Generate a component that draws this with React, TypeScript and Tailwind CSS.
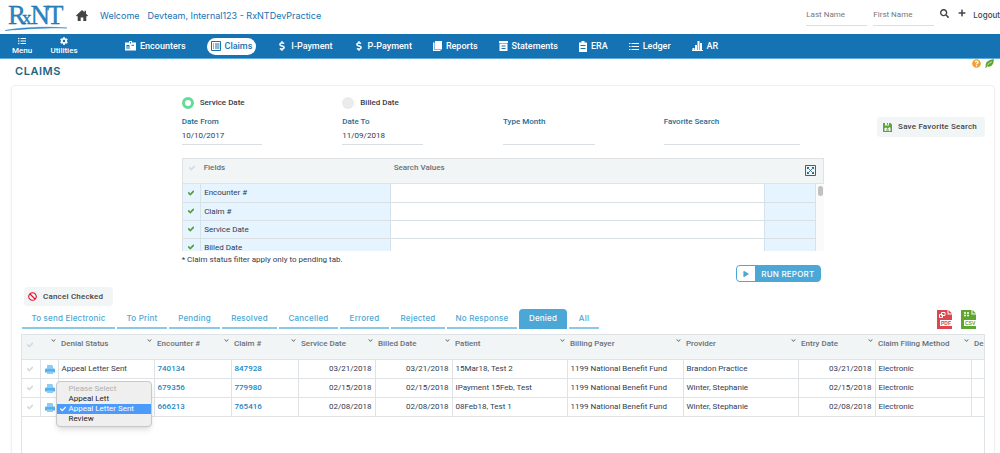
import { useState } from 'react';
import type { ReactNode } from 'react';
import clsx from 'clsx';
import {
  FaBan,
  FaCheck,
  FaChevronDown,
  FaCog,
  FaDollarSign,
  FaListUl,
  FaPlay,
  FaPlus,
  FaQuestionCircle,
  FaSearch,
  FaSort,
} from 'react-icons/fa';

type Claim = {
  status: string;
  encounter: string;
  claim: string;
  serviceDate: string;
  billedDate: string;
  patient: string;
  provider: string;
};

const claims: Claim[] = [
  {
    status: 'Appeal Letter Sent',
    encounter: '740134',
    claim: '847928',
    serviceDate: '03/21/2018',
    billedDate: '03/21/2018',
    patient: '15Mar18, Test 2',
    provider: 'Brandon Practice',
  },
  {
    status: '',
    encounter: '679356',
    claim: '779980',
    serviceDate: '02/15/2018',
    billedDate: '02/15/2018',
    patient: 'IPayment 15Feb, Test',
    provider: 'Winter, Stephanie',
  },
  {
    status: '',
    encounter: '666213',
    claim: '765416',
    serviceDate: '02/08/2018',
    billedDate: '02/08/2018',
    patient: '08Feb18, Test 1',
    provider: 'Winter, Stephanie',
  },
];

const columns = [
  { label: '', width: 'w-[18px]' },
  { label: '', width: 'w-[18px]' },
  { label: 'Denial Status', width: 'w-[96px]' },
  { label: 'Encounter #', width: 'w-[77px]' },
  { label: 'Claim #', width: 'w-[67px]' },
  { label: 'Service Date', width: 'w-[77px]' },
  { label: 'Billed Date', width: 'w-[77px]' },
  { label: 'Patient', width: 'w-[115px]' },
  { label: 'Billing Payer', width: 'w-[116px]' },
  { label: 'Provider', width: 'w-[115px]' },
  { label: 'Entry Date', width: 'w-[77px]' },
  { label: 'Claim Filing Method', width: 'w-[96px]' },
  { label: 'De', width: 'w-[77px]' },
];

const tabs = [
  { label: 'To send Electronic', width: 'w-[93px]' },
  { label: 'To Print', width: 'w-[50px]' },
  { label: 'Pending', width: 'w-[51px]' },
  { label: 'Resolved', width: 'w-[55px]' },
  { label: 'Cancelled', width: 'w-[59px]' },
  { label: 'Errored', width: 'w-[49px]' },
  { label: 'Rejected', width: 'w-[54px]' },
  { label: 'No Response', width: 'w-[70px]' },
  { label: 'Denied', width: 'w-[48px]' },
  { label: 'All', width: 'w-[30px]' },
];

const fields = ['Encounter #', 'Claim #', 'Service Date', 'Billed Date'];

const statuses = ['Appeal Lett', 'Appeal Letter Sent', 'Review'];

function Logo() {
  return (
    <svg width="64" height="32" viewBox="0 0 64 32" role="img" aria-label="RxNT">
      <text
        x="3"
        y="23"
        fontSize="27"
        fontFamily="'Liberation Serif', serif"
        fill="#2a86c6"
        stroke="#1b5f94"
        strokeWidth="0.3"
      >
        R<tspan dx="-4" fontSize="19">x</tspan>
        <tspan dx="-1">N</tspan>
        <tspan dx="-3">T</tspan>
      </text>
      <path d="M0 29.5C18 26 42 25.5 62 27C42 26.5 18 28 0 29.5Z" fill="#2a86c6" stroke="#2a86c6" strokeWidth="0.5" />
    </svg>
  );
}

function HomeIcon() {
  return (
    <svg width="12" height="11" viewBox="0 0 12 11" fill="currentColor">
      <path d="M6 0L8.500 2.300V.8H10v2.900L12 5.600 11.400 6.300H10.300V11H7.300V7.500H4.700V11H1.700V6.300H.6L0 5.600Z" />
    </svg>
  );
}

function LeafIcon() {
  return (
    <svg width="9" height="9" viewBox="0 0 9 9">
      <path d="M.8 7.500C0 3.500 3 .8 8.800 0C9 5 6.500 8.500 2.200 7.600L.9 9L0 8.600Z" fill="#5fa52f" />
      <path d="M2.200 6.200C3.500 4.800 4.800 3.700 6.800 2.700" stroke="#fff" strokeWidth=".7" fill="none" />
    </svg>
  );
}

function PrinterIcon() {
  return (
    <svg width="10" height="9" viewBox="0 0 10 9">
      <path d="M2 0h5l1 1v2.500H2Z" fill="#8ecbf5" />
      <path d="M0 4.500Q0 3.500 1 3.500h8Q10 3.500 10 4.500V7.500H0Z" fill="#55b0ee" />
      <path d="M2 6.500h6v2.500H2Z" fill="#8ecbf5" />
    </svg>
  );
}

function BadgeIcon() {
  return (
    <svg width="11" height="10" viewBox="0 0 11 10" fill="currentColor">
      <path
        fillRule="evenodd"
        d="M0 1.500h4V0h3v1.500H11V9.500H0ZM5 1v1.500h1V1ZM1.500 4v4h1V5.200h1V8h1V4ZM6.500 3.800v1h2.500v-1Z"
      />
    </svg>
  );
}

function GridListIcon() {
  return (
    <svg width="10" height="10" viewBox="0 0 10 10" fill="none" stroke="currentColor">
      <path d="M.5 .5h9v9h-9Z" />
      <path d="M2 3h1M4 3h4.500M2 5h1M4 5h4.500M2 7h1M4 7h4.500" />
    </svg>
  );
}

function PagesIcon() {
  return (
    <svg width="9" height="10" viewBox="0 0 9 10" fill="currentColor">
      <path d="M2 0H9v8.500H2Z" />
      <path d="M1.500 1.500H0V10h7.500V9H1.500Z" />
    </svg>
  );
}

function StatementIcon() {
  return (
    <svg width="9" height="10" viewBox="0 0 9 10" fill="currentColor">
      <path fillRule="evenodd" d="M0 0h9v2H0ZM.5 2.500h8V10h-8ZM2.500 4.500v1h4v-1ZM2.500 7v1h4V7Z" />
    </svg>
  );
}

function ClipboardIcon() {
  return (
    <svg width="8" height="11" viewBox="0 0 8 11" fill="currentColor">
      <path fillRule="evenodd" d="M0 1.500h2.500V0h3v1.500H8V11H0ZM1.500 4v1h5V4ZM1.500 7v1h5V7Z" />
    </svg>
  );
}

function LinesIcon() {
  return (
    <svg width="10" height="8" viewBox="0 0 10 8" stroke="currentColor">
      <path d="M0 1.500h1.500M2.500 1.500H10M0 4.500h1.500M2.500 4.500H10M0 7.500h1.500M2.500 7.500H10" />
    </svg>
  );
}

function BarsIcon() {
  return (
    <svg width="11" height="10" viewBox="0 0 11 10" fill="currentColor">
      <path d="M0 9h11v1H0ZM.5 7h2v2h-2ZM3 4h2v5H3ZM5.500 0h2v9h-2ZM8 2h2v7H8Z" />
    </svg>
  );
}

function ExpandIcon() {
  return (
    <svg width="11" height="11" viewBox="0 0 11 11" fill="none" stroke="currentColor">
      <path d="M.5 .5h10v10H.5Z" />
      <path d="M3 3l5 5M8 3L3 8" strokeWidth=".8" />
      <path d="M2 2h2v1H3v1H2ZM7 2h2v2H8V3H7ZM2 7h1v1h1v1H2ZM8 7h1v2H7V8h1Z" fill="currentColor" stroke="none" />
    </svg>
  );
}

function SaveIcon() {
  return (
    <svg width="9" height="9" viewBox="0 0 9 9">
      <path
        fillRule="evenodd"
        fill="#5fa52f"
        d="M0 0h2v2.500h4V0h1.500L9 1.500V9H0ZM1.500 5V8h6V5L6.500 4 4.500 6 3.200 4.500ZM4 0h1v1.800H4Z"
      />
      <path d="M3 7h3" stroke="#5fa52f" />
    </svg>
  );
}

function FileIcon({ label, color }: { label: string; color: string }) {
  return (
    <svg width="15" height="19" viewBox="0 0 15 19">
      <path d="M0 0h10.500v4.500H15V19H0Z" fill={color} />
      <path d="M11.500 0L15 3.500h-3.500Z" fill={color} />
      <path d="M3 10h12v6H3Z" fill="#fff" />
      {label === 'PDF' ? (
        <path d="M4.500 2.500h3.500v3h-3.500ZM2.500 4.500h3v3h-3Z" fill="none" stroke="#fff" />
      ) : (
        <path d="M3 3h2M6 3h2M3 5.500h2M6 5.500h2" stroke="#fff" strokeWidth="1.500" />
      )}
      <text x="4" y="15" fontSize="5" fontWeight="700" fontFamily="'Liberation Sans', sans-serif" fill={color}>
        {label}
      </text>
    </svg>
  );
}

function Check({ size, className }: { size: number; className?: string }) {
  return <FaCheck size={size} stroke="currentColor" strokeWidth={50} className={className} />;
}

function NavItem({ icon, label, active }: { icon: ReactNode; label: string; active?: boolean }) {
  return (
    <a
      href="#"
      className={clsx(
        'flex items-center gap-1 text-[9px] font-medium whitespace-nowrap',
        active ? 'h-[17px] rounded-full bg-white px-1 text-[#1572b3]' : 'text-white',
      )}
    >
      {icon}
      {label}
    </a>
  );
}

function FormField({ id, label, value, width }: { id: string; label: string; value?: string; width: string }) {
  return (
    <div className="flex flex-col">
      <label htmlFor={id} className="font-medium text-[#1d6d90]">
        {label}
      </label>
      <input
        id={id}
        defaultValue={value}
        className={clsx('h-[17px] border-b border-[#dcdfe1] pb-0.5 text-[8px] text-[#333a50] outline-none', width)}
      />
    </div>
  );
}

export default function App() {
  const [dateType, setDateType] = useState('Service Date');
  const [activeTab, setActiveTab] = useState('Denied');
  const [status, setStatus] = useState('Appeal Letter Sent');

  return (
    <div className="flex h-screen flex-col overflow-hidden bg-white font-['Roboto',sans-serif] text-[8px] leading-3 text-[#333a50]">
      <header className="flex h-[34px] shrink-0 items-center pl-[5px]">
        <Logo />
        <a href="#" aria-label="Home" className="ml-[7px] pb-1 text-[#444]">
          <HomeIcon />
        </a>
        <p className="ml-3 flex gap-2 pb-0.5 font-['Inter',sans-serif] text-[9px] text-[#1572b3]">
          <span>Welcome</span>
          <span>Devteam, Internal123 - RxNTDevPractice</span>
        </p>
        <form className="ml-auto flex items-center gap-1.5">
          <input
            aria-label="Last Name"
            placeholder="Last Name"
            className="h-[18px] w-[61px] border-b border-[#dcdfe1] pb-1 text-[8px] outline-none placeholder:text-[#777]"
          />
          <input
            aria-label="First Name"
            placeholder="First Name"
            className="h-[18px] w-[61px] border-b border-[#dcdfe1] pb-1 text-[8px] outline-none placeholder:text-[#777]"
          />
          <button type="button" aria-label="Search" className="pb-2 text-[#444]">
            <FaSearch size={9} />
          </button>
          <button type="button" aria-label="Add" className="ml-[3px] pb-2 text-[#444]">
            <FaPlus size={8} />
          </button>
          <a href="#" className="pb-1 pl-px font-['Inter',sans-serif] text-[8px] font-medium text-[#444]">
            Logout
          </a>
        </form>
      </header>

      <nav className="flex h-[25px] shrink-0 items-center border-b border-[#5fabdc] bg-[#1572b3] text-white">
        <a href="#" className="flex w-11 flex-col items-center gap-px text-[8px] leading-[10px] font-medium">
          <FaListUl size={8} />
          Menu
        </a>
        <a href="#" className="flex w-10 flex-col items-center gap-px text-[8px] leading-[10px] font-medium">
          <FaCog size={8} />
          Utilities
        </a>
        <div className="ml-[41px] flex items-center gap-[21px]">
          <NavItem icon={<BadgeIcon />} label="Encounters" />
          <NavItem icon={<GridListIcon />} label="Claims" active />
          <NavItem icon={<FaDollarSign size={10} />} label="I-Payment" />
          <NavItem icon={<FaDollarSign size={10} />} label="P-Payment" />
          <NavItem icon={<PagesIcon />} label="Reports" />
          <NavItem icon={<StatementIcon />} label="Statements" />
          <NavItem icon={<ClipboardIcon />} label="ERA" />
          <NavItem icon={<LinesIcon />} label="Ledger" />
          <NavItem icon={<BarsIcon />} label="AR" />
        </div>
      </nav>

      <div className="flex h-[26px] shrink-0 justify-between pr-1.5 pl-[15px]">
        <h1 className="pt-1.5 font-['Inter',sans-serif] text-[11px] font-semibold tracking-wider text-[#1d6580]">
          CLAIMS
        </h1>
        <div className="flex gap-1">
          <FaQuestionCircle size={9} className="text-[#f0a030]" />
          <LeafIcon />
        </div>
      </div>

      <main className="mr-[5px] ml-[11px] flex flex-1 flex-col rounded-t border border-b-0 border-[#f0f0f0] px-[9px] pt-[11px] shadow-xs">
        <section className="grid grid-cols-6">
          <div className="col-span-4 col-start-2">
            <div className="grid grid-cols-4">
              {['Service Date', 'Billed Date'].map((type) => (
                <label key={type} className="flex items-center gap-1.5 font-medium">
                  <input
                    type="radio"
                    name="dateType"
                    checked={dateType === type}
                    onChange={() => setDateType(type)}
                    className="size-3 appearance-none rounded-full bg-[#ebebeb] checked:border-[3px] checked:border-[#62dc96] checked:bg-white"
                  />
                  {type}
                </label>
              ))}
            </div>
            <div className="mt-[7px] grid grid-cols-4">
              <FormField id="from" label="Date From" value="10/10/2017" width="w-1/2" />
              <FormField id="to" label="Date To" value="11/09/2018" width="w-1/2" />
              <FormField id="month" label="Type Month" width="w-[57%]" />
              <FormField id="favorite" label="Favorite Search" width="w-[85%]" />
            </div>

            <div className="mt-[13px] border-t border-l border-[#dfe3e5]">
              <div className="flex h-[25px] border-r border-b border-[#dfe3e5] bg-[#f1f5f6] pt-[3px] pr-[7px] font-medium text-[#6b7075]">
                <span className="flex w-[21px] pt-[3px] pl-1.5 text-[#d5dadd]">
                  <Check size={6} />
                </span>
                <span className="w-[190px]">Fields</span>
                <span>Search Values</span>
                <button type="button" aria-label="Expand" className="mt-[3px] ml-auto self-start text-[#1d6d90]">
                  <ExpandIcon />
                </button>
              </div>
              <div className="flex h-[67px] overflow-hidden">
                <table className="flex-1 table-fixed">
                  <colgroup>
                    <col className="w-[18px]" />
                    <col className="w-[30%]" />
                    <col />
                    <col className="w-[51px]" />
                  </colgroup>
                  <tbody>
                    {fields.map((field) => (
                      <tr key={field} className="h-[18px] border-b border-[#d9e0e4] leading-[11px]">
                        <td className="border-r border-[#d3e2ec] bg-[#e5f4fe] pl-[5px] text-[#4f9c2c]">
                          <Check size={6} />
                        </td>
                        <td className="border-r border-[#d3e2ec] bg-[#e5f4fe] px-[3px] py-[3px]">{field}</td>
                        <td />
                        <td className="border-x border-[#d3e2ec] bg-[#e5f4fe]" />
                      </tr>
                    ))}
                  </tbody>
                </table>
                <div className="w-2 bg-[#fafafa] pt-0.5 pl-0.5">
                  <div className="h-2.5 w-[5px] rounded-full bg-[#c1c1c1]" />
                </div>
              </div>
            </div>
            <p className="mt-[3px] leading-[11px]">* Claim status filter apply only to pending tab.</p>
          </div>
          <div className="pt-5">
            <button
              type="button"
              className="ml-auto flex h-5 items-center gap-1.5 rounded-sm bg-[#f1f5f6] pr-2 pl-1.5 font-medium tracking-wide text-[#444]"
            >
              <SaveIcon />
              Save Favorite Search
            </button>
          </div>
          <div className="col-span-4 col-start-2 flex pr-[3px]">
            <button
              type="button"
              className="ml-auto flex h-[17px] items-center overflow-hidden rounded-sm border border-[#4ba7d5] bg-[#4ba7d5] font-['Inter',sans-serif] font-medium text-white"
            >
              <span className="flex h-full w-[18px] items-center justify-center bg-white text-[#4ba7d5]">
                <FaPlay size={6} />
              </span>
              <span className="px-1.5 tracking-wide">RUN REPORT</span>
            </button>
          </div>
        </section>

        <section className="mt-[5px] flex flex-1 flex-col">
          <button
            type="button"
            className="ml-[3px] flex h-[19px] w-[89px] items-center gap-1.5 rounded-sm bg-[#f1f5f6] px-1 font-medium tracking-wide text-[#444]"
          >
            <FaBan size={9} className="shrink-0 text-[#e8112d]" />
            <span className="whitespace-nowrap">Cancel Checked</span>
          </button>

          <div className="mt-[3px] flex items-start">
            <div role="tablist" className="flex gap-0.5 pl-px">
              {tabs.map(({ label, width }) => (
                <button
                  key={label}
                  type="button"
                  role="tab"
                  aria-selected={activeTab === label}
                  onClick={() => setActiveTab(label)}
                  className={clsx(
                    "h-5 border-b-2 font-['Inter',sans-serif] font-medium tracking-wide whitespace-nowrap",
                    width,
                    activeTab === label
                      ? 'rounded-t border-[#4ba7d5] bg-[#4ba7d5] text-white'
                      : 'border-[#8bc8e8] text-[#4ba7d5]',
                  )}
                >
                  {label}
                </button>
              ))}
            </div>
            <div className="ml-auto flex gap-[9px] pt-px pr-[9px]">
              <button type="button" aria-label="Export PDF">
                <FileIcon label="PDF" color="#d9474f" />
              </button>
              <button type="button" aria-label="Export CSV">
                <FileIcon label="CSV" color="#5fa52f" />
              </button>
            </div>
          </div>

          <div className="mt-[5px] flex-1 overflow-hidden border border-b-0 border-[#dfe3e5]">
            <table className="w-[1026px] table-fixed">
              <thead>
                <tr className="h-6 border-b border-[#dfe3e5] bg-[#f1f5f6] text-left align-top text-[#6b7075]">
                  {columns.map(({ label, width }, i) => (
                    <th key={i} className={clsx('font-medium', width)}>
                      <div className="flex justify-between pt-[3px] pr-0.5 pl-[3px]">
                        {i === 0 ? (
                          <Check size={6} className="mt-1 ml-0.5 text-[#d5dadd]" />
                        ) : (
                          <>
                            <span className="whitespace-nowrap">{label}</span>
                            <FaChevronDown size={5} />
                          </>
                        )}
                      </div>
                    </th>
                  ))}
                </tr>
              </thead>
              <tbody>
                {claims.map((claim, i) => (
                  <tr
                    key={claim.claim}
                    className="h-[18px] border-b border-[#dfe3e5] whitespace-nowrap *:border-r *:border-[#dfe3e5] *:px-[3px] *:py-[3px]"
                  >
                    <td>
                      <Check size={6} className="ml-0.5 text-[#d5dadd]" />
                    </td>
                    <td>
                      <div className="pt-0.5 pl-px">
                        <PrinterIcon />
                      </div>
                    </td>
                    <td>
                      {i < 2 ? (
                        claim.status
                      ) : (
                        <div className="relative h-3">
                          <FaSort size={8} className="absolute top-0.5 -right-0.5 text-[#222]" />
                          <ul
                            role="listbox"
                            aria-label="Denial Status"
                            className="absolute -top-5 -left-1.5 w-24 rounded border border-[#c8c8c8] bg-[#efefef] py-0.5 leading-[10px] text-[#222] shadow-md"
                          >
                            <li className="pl-3 text-[#b0b0b0]">Please Select</li>
                            {statuses.map((item) => (
                              <li key={item} role="option" aria-selected={status === item}>
                                <button
                                  type="button"
                                  onClick={() => setStatus(item)}
                                  className={clsx(
                                    'flex w-full items-center',
                                    status === item && 'bg-[#4c9bfb] text-white',
                                  )}
                                >
                                  <span className="flex w-3 justify-center">
                                    {status === item && <FaCheck size={6} />}
                                  </span>
                                  {item}
                                </button>
                              </li>
                            ))}
                          </ul>
                        </div>
                      )}
                    </td>
                    <td className="font-medium text-[#1b86c2]">
                      <a href="#">{claim.encounter}</a>
                    </td>
                    <td className="font-medium text-[#1b86c2]">
                      <a href="#">{claim.claim}</a>
                    </td>
                    <td className="text-right">{claim.serviceDate}</td>
                    <td className="text-right">{claim.billedDate}</td>
                    <td>{claim.patient}</td>
                    <td>1199 National Benefit Fund</td>
                    <td>{claim.provider}</td>
                    <td className="text-right">{claim.serviceDate}</td>
                    <td>Electronic</td>
                    <td />
                  </tr>
                ))}
              </tbody>
            </table>
          </div>
        </section>
      </main>
    </div>
  );
}
